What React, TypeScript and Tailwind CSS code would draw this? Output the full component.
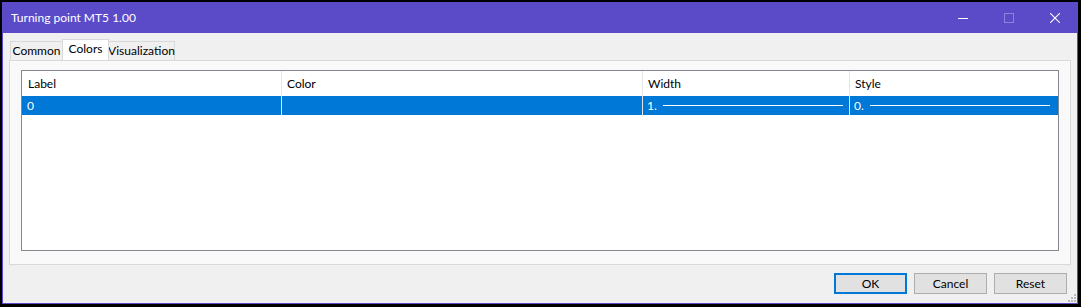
import React from "react";

const font = { fontFamily: 'Lato, "Noto Sans", Arial, sans-serif' };

function TitleBar() {
  return (
    <div className="h-[31px] bg-[#5b4bc9] flex items-center justify-between text-white">
      <span className="pl-[9px] text-[12px] pt-[1px]">Turning point MT5 1.00</span>
      <div className="flex items-center h-full">
        <button className="w-[46px] h-full flex items-center justify-center">
          <svg width="10" height="10" viewBox="0 0 10 10">
            <path d="M0 5.5h10" stroke="white" strokeWidth="1" />
          </svg>
        </button>
        <button className="w-[46px] h-full flex items-center justify-center">
          <svg width="10" height="10" viewBox="0 0 10 10">
            <rect x="0.5" y="0.5" width="9" height="9" fill="none" stroke="#8c82dc" strokeWidth="1" />
          </svg>
        </button>
        <button className="w-[46px] h-full flex items-center justify-center">
          <svg width="10" height="10" viewBox="0 0 10 10">
            <path d="M0 0L10 10M10 0L0 10" stroke="white" strokeWidth="1.1" />
          </svg>
        </button>
      </div>
    </div>
  );
}

function Tabs() {
  return (
    <div className="flex items-end h-[20px] pl-[1px] text-[12px] text-black">
      <div className="w-[53px] h-[19px] border border-b-0 border-[#d9d9d9] bg-[#f0f0f0] flex items-center justify-center">
        Common
      </div>
      <div className="w-[47px] h-[21px] border border-b-0 border-[#d9d9d9] bg-white flex items-center justify-center -mx-[1px] relative z-10 pb-[2px]">
        Colors
      </div>
      <div className="w-[67px] h-[19px] border border-b-0 border-[#d9d9d9] bg-[#f0f0f0] flex items-center justify-center">
        Visualization
      </div>
    </div>
  );
}

function Line() {
  return <div className="flex-1 h-px bg-white ml-[6px]" />;
}

function ListView() {
  return (
    <div className="flex-1 border border-[#828790] bg-white flex flex-col text-[12px]">
      <div className="h-[25px] grid grid-cols-[260px_361px_207px_1fr] text-black">
        <div className="pl-[6px] flex items-center border-r border-[#e5e5e5]">Label</div>
        <div className="pl-[5px] flex items-center border-r border-[#e5e5e5]">Color</div>
        <div className="pl-[5px] flex items-center border-r border-[#e5e5e5]">Width</div>
        <div className="pl-[5px] flex items-center">Style</div>
      </div>
      <div className="h-[19px] grid grid-cols-[260px_361px_207px_1fr] bg-[#0078d7] text-white">
        <div className="pl-[5px] flex items-center border-r border-[#e5e5e5]">0</div>
        <div className="border-r border-[#e5e5e5]" />
        <div className="pl-[4px] pr-[6px] flex items-center border-r border-[#e5e5e5]">
          <span>1.</span>
          <Line />
        </div>
        <div className="pl-[4px] pr-[8px] flex items-center">
          <span>0.</span>
          <Line />
        </div>
      </div>
    </div>
  );
}

function Button({ label, primary }: { label: string; primary?: boolean }) {
  return (
    <button
      className={
        primary
          ? "w-[73px] h-[21px] bg-[#e1e1e1] border-2 border-[#0078d7] text-[12px] text-black flex items-center justify-center"
          : "w-[73px] h-[21px] bg-[#e1e1e1] border border-[#adadad] text-[12px] text-black flex items-center justify-center"
      }
    >
      {label}
    </button>
  );
}

export default function App() {
  return (
    <div className="w-[1081px] h-[307px] bg-black pt-[2px] pl-[2px]" style={font}>
      <div className="w-[1076px] h-[302px] flex flex-col">
        <TitleBar />
        <div className="flex-1 bg-[#f0f0f0] border border-t-0 border-[#5b4bc9] flex flex-col relative">
          <div className="pt-[7px] px-[6px]">
            <Tabs />
            <div className="h-[205px] border border-[#d9d9d9] bg-[#f9f9f9] px-[11px] pt-[9px] pb-[13px] flex flex-col">
              <ListView />
            </div>
          </div>
          <div className="flex justify-end gap-[7px] pr-[10px] pt-[8px]">
            <Button label="OK" primary />
            <Button label="Cancel" />
            <Button label="Reset" />
          </div>
          <svg className="absolute right-[1px] bottom-[1px]" width="8" height="8" viewBox="0 0 8 8">
            <g fill="#b8b8b8">
              <rect x="6" y="0" width="2" height="2" />
              <rect x="3" y="3" width="2" height="2" />
              <rect x="6" y="3" width="2" height="2" />
              <rect x="0" y="6" width="2" height="2" />
              <rect x="3" y="6" width="2" height="2" />
              <rect x="6" y="6" width="2" height="2" />
            </g>
          </svg>
        </div>
      </div>
    </div>
  );
}
